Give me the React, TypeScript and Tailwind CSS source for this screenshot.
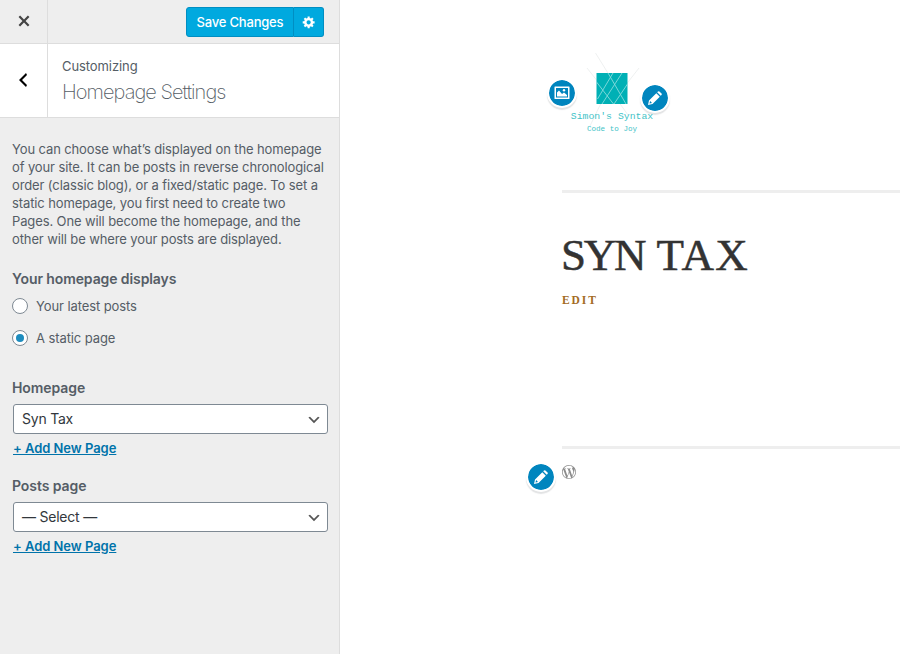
import React from 'react';
import { SiWordpress } from 'react-icons/si';

const SANS = "font-['Inter','Liberation_Sans',sans-serif]";

function Dashicon({ d, className }: { d: string; className: string }) {
  return (
    <svg viewBox="0 0 20 20" fill="currentColor" className={className} aria-hidden="true">
      <path d={d} />
    </svg>
  );
}

const CLOSE = 'M14.95 6.46L11.41 10l3.54 3.54-1.41 1.41L10 11.42l-3.53 3.53-1.42-1.42L8.58 10 5.05 6.47l1.42-1.42L10 8.58l3.54-3.53z';
const BACK = 'M14 5l-5 5 5 5-1 2-7-7 7-7z';
const GEAR =
  'M18 12h-2.18c-.17.7-.44 1.35-.81 1.93l1.54 1.54-2.1 2.1-1.54-1.54c-.58.36-1.23.63-1.91.79V19H8v-2.18c-.68-.16-1.33-.43-1.91-.79l-1.54 1.54-2.12-2.12 1.54-1.54c-.36-.58-.63-1.23-.79-1.91H1V9.03h2.17c.16-.7.44-1.35.8-1.94L2.43 5.55l2.1-2.1 1.54 1.54c.58-.37 1.24-.64 1.93-.81V2h3v2.18c.68.16 1.33.43 1.91.79l1.54-1.54 2.12 2.12-1.54 1.54c.36.59.64 1.24.8 1.94H18V12zm-8.5 1.5c1.66 0 3-1.34 3-3s-1.34-3-3-3-3 1.34-3 3 1.34 3 3 3z';
const DOWN = 'M5 6l5 5 5-5 2 1-7 7-7-7 2-1z';

function Pencil() {
  return (
    <svg viewBox="0 0 14 14" className="size-[14px]" fill="currentColor" aria-hidden="true">
      <path d="M9.200 1.300L10 .5Q10.700-.1 11.400.5L13.500 2.600Q14.100 3.300 13.500 4L12.700 4.800z" />
      <path fillRule="evenodd" d="M8.300 2.200l3.500 3.500-7.300 7.300L0 14l1-4.500zM2.100 10L1.500 12.500l2.500-.6z" />
    </svg>
  );
}

function Badge({ className, children }: { className: string; children: React.ReactNode }) {
  return (
    <button
      className={`absolute flex size-[30px] items-center justify-center rounded-full border-2 border-white bg-[#0085be] bg-clip-padding text-white shadow-[0_2px_1px_rgba(60,67,74,0.15)] ${className}`}
    >
      {children}
    </button>
  );
}

function Radio({ label, checked }: { label: string; checked?: boolean }) {
  return (
    <label className="flex h-8 items-center gap-2">
      <span className="flex size-4 items-center justify-center rounded-full border border-[#7e8993] bg-white">
        {checked && <span className="size-2 rounded-full bg-[#1e8cbe]" />}
      </span>
      <span className="pt-0.5 text-[13px] tracking-[-0.09px]">{label}</span>
    </label>
  );
}

function PageSelect({ label, value }: { label: string; value: string }) {
  return (
    <div className="h-[98px]">
      <div className="text-[14px] leading-6 font-semibold tracking-[-0.08px]">{label}</div>
      <div className="mt-1 ml-px flex h-[30px] w-[315px] items-center justify-between rounded-[3px] border border-[#7e8993] bg-white pr-[5px] pl-2 text-[14px] text-[#32373c]">
        <span className="pb-0.5 tracking-[-0.22px]">{value}</span>
        <Dashicon d={DOWN} className="size-4 translate-y-px text-[#555]" />
      </div>
      <a className="mt-1 ml-px block text-[13px] leading-5 font-semibold tracking-[-0.04px] text-[#0073aa] underline">+ Add New Page</a>
    </div>
  );
}

function Logo() {
  return (
    <svg viewBox="0 0 100 90" className="h-[90px] w-[100px]" aria-label="Simon's Syntax">
      <g stroke="#eceeee" strokeWidth="0.9" fill="none">
        <path d="M35.500 3l18 29M27 18l27 34M79 18L54 50M42 51L30 76M58 51l10 14" />
      </g>
      <rect x="36.500" y="23" width="31" height="31" fill="#00b0b5" />
      <g stroke="#87dadd" strokeWidth="0.900" fill="none">
        <path d="M36.500 32l17 22M48 23l18 31M67.500 34L54 54M62 23L42 54M53 23L37.500 49" />
      </g>
    </svg>
  );
}

function Sidebar() {
  return (
    <aside className="h-full w-[340px] shrink-0 border-r border-[#ddd] bg-[#eee] text-[#555d66]">
      <header className="flex h-11 border-b border-[#ddd]">
        <button className="flex w-12 items-center justify-center border-r border-[#ddd] pb-px text-[#444]">
          <Dashicon d={CLOSE} className="size-[22px]" />
        </button>
        <div className="flex flex-1 justify-end pt-[7px] pr-[15px]">
          <button className="h-[30px] w-[108px] rounded-l-[3px] border border-[#008ec2] bg-[#00a9df] pt-0.5 text-[13px] font-medium tracking-[-0.2px] text-white">
            Save Changes
          </button>
          <button className="flex h-[30px] w-[30px] items-center justify-center rounded-r-[3px] border border-l-0 border-[#008ec2] bg-[#00a9df] text-white">
            <Dashicon d={GEAR} className="size-[14px]" />
          </button>
        </div>
      </header>
      <div className="flex h-[74px] border-b border-[#ddd] bg-white">
        <button className="flex w-12 items-center justify-center border-r border-[#ddd] pr-0.5 pb-0.5 text-black">
          <Dashicon d={BACK} className="size-5" />
        </button>
        <div className="pt-3 pl-[14px]">
          <div className="text-[13px] leading-5 tracking-[-0.08px]">Customizing</div>
          <h1 className="mt-[3px] text-[20px] leading-[26px] font-extralight tracking-[-0.95px]">Homepage Settings</h1>
        </div>
      </div>
      <div className="pt-[22px] pl-3">
        <p className="text-[13px] leading-[18px] tracking-[-0.115px] whitespace-nowrap">
          You can choose what’s displayed on the homepage
          <br />
          of your site. It can be posts in reverse chronological
          <br />
          order (classic blog), or a fixed/static page. To set a
          <br />
          static homepage, you first need to create two
          <br />
          Pages. One will become the homepage, and the
          <br />
          other will be where your posts are displayed.
        </p>
        <div className="mt-[19px] text-[14px] leading-6 font-semibold tracking-[-0.1px]">Your homepage displays</div>
        <div className="-mt-px">
          <Radio label="Your latest posts" />
          <Radio label="A static page" checked />
        </div>
        <div className="mt-[22px]">
          <PageSelect label="Homepage" value="Syn Tax" />
          <PageSelect label="Posts page" value="— Select —" />
        </div>
      </div>
    </aside>
  );
}

function Preview() {
  return (
    <main className="h-full flex-1 pl-[222px]">
      <div className="relative flex h-[190px] flex-col pt-[50px]">
        <div className="-ml-0.5">
          <Logo />
        </div>
        <div className="-mt-[30px] w-[100px] text-center font-['Liberation_Mono',monospace] leading-[14px] whitespace-nowrap text-[#3fc3c7]">
          <div className="text-[9.8px]">Simon's Syntax</div>
          <div className="text-[7.6px] leading-[10px]">Code to Joy</div>
        </div>
        <Badge className="top-[78px] -left-[15px]">
          <svg viewBox="0 0 16 14" className="h-[14px] w-4" fill="currentColor" aria-hidden="true">
            <path
              fillRule="evenodd"
              d="M.5 1Q.5.500 1 .500h14q.5 0 .5.500v11.500q0 .5-.5.500H1q-.5 0-.5-.5zM2 2v9.500h12V2z"
            />
            <path d="M3 10.500V6.500L5 4.500l3 3.500 2-1.500 3 2.500v1.500z" />
            <circle cx="10" cy="4.300" r="1.200" />
          </svg>
        </Badge>
        <Badge className="top-[83px] left-[78px]">
          <Pencil />
        </Badge>
      </div>
      <div className="h-[3px] bg-[#eee]" />
      <div className="h-[253px] pt-[37px]">
        <h2 className="-ml-px font-['Liberation_Serif',serif] text-[45px] leading-[50px] whitespace-nowrap text-[#333] [-webkit-text-stroke:0.5px_#333]">
          <span className="tracking-[-2.2px] [word-spacing:3px]">SYN </span>
          <span className="tracking-[1.2px]">TAX</span>
        </h2>
        <a className="mt-[13px] block font-['Liberation_Serif',serif] text-[11.500px] leading-[14px] font-bold tracking-[1.9px] text-[#a36b24]">
          EDIT
        </a>
      </div>
      <div className="h-[3px] bg-[#eee]" />
      <div className="relative pt-4">
        <SiWordpress className="size-[14px] text-[#8c8c8c]" />
        <Badge className="top-[13px] -left-9">
          <Pencil />
        </Badge>
      </div>
    </main>
  );
}

export default function App() {
  return (
    <div className={`flex h-[654px] w-[900px] overflow-hidden bg-white ${SANS}`}>
      <Sidebar />
      <Preview />
    </div>
  );
}
